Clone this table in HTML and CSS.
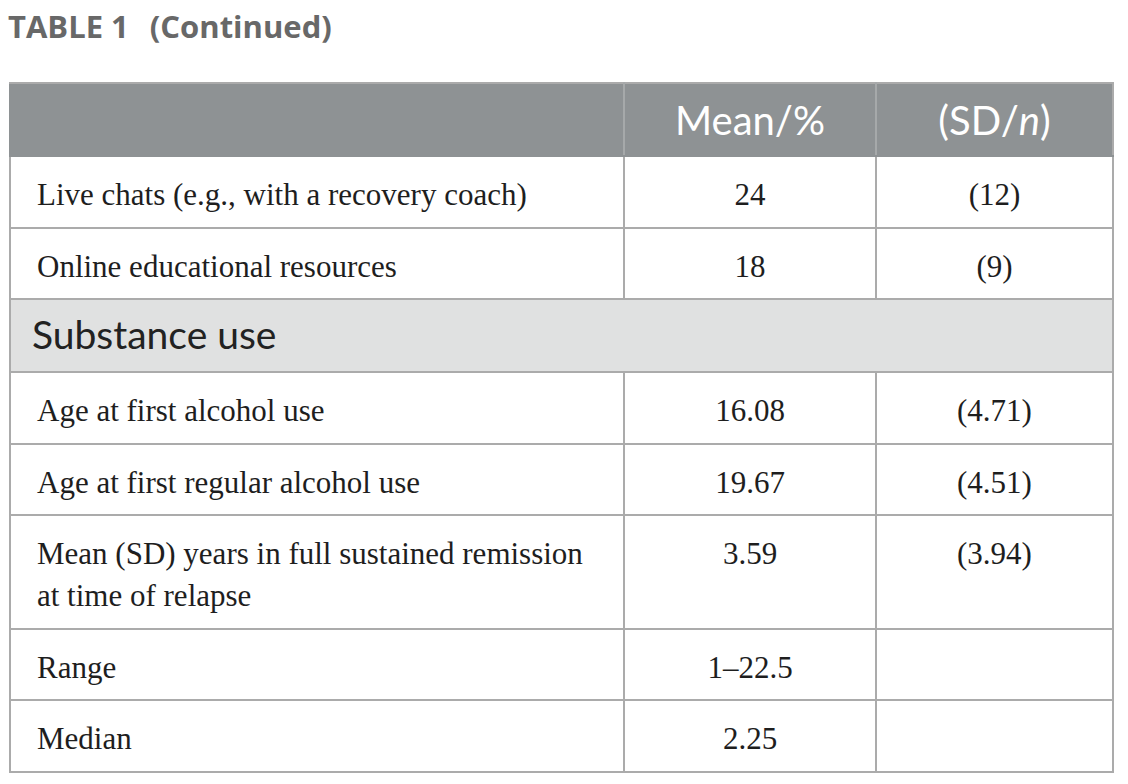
FILE: index.html
```html
<!DOCTYPE html>
<html>
<head>
<meta charset="utf-8">
<link rel="stylesheet" href="styles.css">
</head>
<body>
<h1 class="caption"><span class="label">TABLE 1</span><span class="cont">(Continued)</span></h1>
<table class="data">
  <colgroup>
    <col class="c1"><col class="c2"><col class="c3">
  </colgroup>
  <thead>
    <tr><th></th><th>Mean/%</th><th>(SD/<i>n</i>)</th></tr>
  </thead>
  <tbody>
    <tr><td>Live chats (e.g., with a recovery coach)</td><td class="num">24</td><td class="num">(12)</td></tr>
    <tr><td>Online educational resources</td><td class="num">18</td><td class="num">(9)</td></tr>
    <tr class="section"><td colspan="3">Substance use</td></tr>
    <tr><td>Age at first alcohol use</td><td class="num">16.08</td><td class="num">(4.71)</td></tr>
    <tr><td>Age at first regular alcohol use</td><td class="num">19.67</td><td class="num">(4.51)</td></tr>
    <tr><td>Mean (SD) years in full sustained remission at time of relapse</td><td class="num">3.59</td><td class="num">(3.94)</td></tr>
    <tr><td>Range</td><td class="num">1–22.5</td><td class="num"></td></tr>
    <tr><td>Median</td><td class="num">2.25</td><td class="num"></td></tr>
  </tbody>
</table>
</body>
</html>
```

FILE: styles.css
```css
html, body {
  margin: 0;
  padding: 0;
  background: #ffffff;
}
body {
  padding: 0 0 0 8px;
}
.caption {
  margin: 0;
  padding-top: 9px;
  height: 82px;
  box-sizing: border-box;
  font-family: "Open Sans", Lato, sans-serif;
  font-weight: 700;
  font-size: 31px;
  line-height: 34px;
  color: #686868;
}
.caption .label {
  margin-right: 21px;
}
.data {
  border-collapse: collapse;
  width: 1103px;
  margin-left: 1px;
  table-layout: fixed;
}
.c1 { width: 614px; }
.c2 { width: 252px; }
.c3 { width: 237px; }
.data th, .data td {
  border: 2px solid #ababab;
}
.data th {
  background: #8e9294;
  color: #ffffff;
  font-family: Lato, "Open Sans", sans-serif;
  font-weight: 400;
  font-size: 40px;
  height: 71px;
  padding: 0;
  text-align: center;
  vertical-align: middle;
  border-color: #8e9294;
  border-right-color: #a6a9aa;
}
.data th:last-child {
  border-right-color: #ababab;
}
.data thead tr th {
  border-top-color: #ababab;
}
.data td {
  font-family: "Liberation Serif", "Times New Roman", serif;
  font-size: 31px;
  line-height: 42px;
  color: #1e1e1e;
  padding: 17px 20px 10.5px 26px;
  vertical-align: top;
}
.data td.num {
  text-align: center;
  padding-left: 8px;
  padding-right: 8px;
}
.data tr.section td {
  background: #e0e1e1;
  font-family: Lato, "Open Sans", sans-serif;
  font-size: 39px;
  color: #222222;
  padding: 13px 21px 16px 21px;
  line-height: 42px;
}
```
